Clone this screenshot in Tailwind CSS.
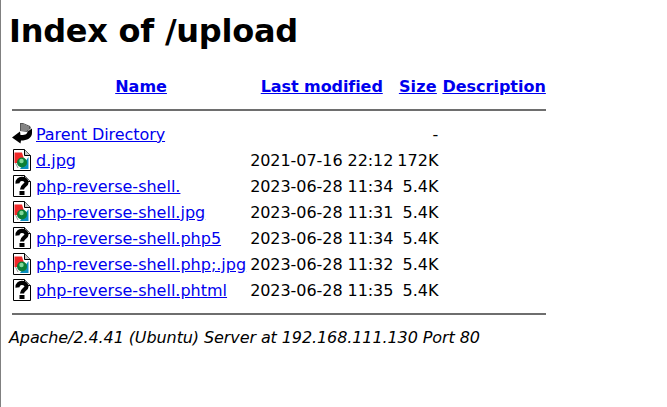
<!DOCTYPE html>
<html lang="en">
<head>
<meta charset="utf-8">
<title>Index of /upload</title>
<script src="https://cdn.jsdelivr.net/npm/@tailwindcss/browser@4"></script>
</head>
<body class="bg-white">
<svg class="hidden" xmlns="http://www.w3.org/2000/svg">
  <symbol id="img" viewBox="0 0 20 22">
    <path d="M1.5 .5H12.5L18.5 6.5V21.5H1.5Z" fill="#fff" stroke="#000"/>
    <path d="M12.5 .5V6.5H18.5" fill="#ccc" stroke="#000"/>
    <path d="M16.5 8V20H8Z" fill="#0a8fc0"/>
    <path d="M2.5 3.5H10L12 10 7 14H2.5Z" fill="#f02828"/>
    <path d="M3.5 14 6 19" stroke="#999"/>
    <circle cx="10" cy="13.5" r="5" fill="#0b7f35"/>
    <circle cx="9.5" cy="12" r="2.2" fill="#7fd89a"/>
  </symbol>
  <symbol id="unk" viewBox="0 0 20 22">
    <path d="M1.5 .5H12.5L18.5 6.5V21.5H1.5Z" fill="#fff" stroke="#000"/>
    <path d="M12.5 .5V6.5H18.5" fill="#ccc" stroke="#000"/>
    <path d="M5.5 8.5C5 2.5 14.5 2.5 14.5 7.5C14.5 10.5 10 10.5 10 14.5" fill="none" stroke="#000" stroke-width="4.2"/>
    <rect x="7.5" y="16" width="5" height="4" fill="#000"/>
  </symbol>
  <symbol id="back" viewBox="0 0 20 22">
    <path d="M8 0H11L18 3 19 5 15 9 8 8Z" fill="#555"/>
    <path d="M10 1V8M12 1V8M14 2V8M16 3V7" stroke="#ddd" stroke-width=".7"/>
    <path d="M15.5 8.5 20 5.5V10C20 15 15 17.5 9 17.5L8.5 20.5 0 14.5 8 8.5 8.5 12C12 12 15 12 15.5 8.5Z" fill="#000"/>
  </symbol>
</svg>
<div class="min-h-screen box-border border-l border-[#808080] pl-2 pt-[13px] pb-2 font-['DejaVu_Sans',sans-serif] text-base leading-[19px] text-black overflow-hidden">
  <h1 class="text-[32px] leading-[37px] font-bold mb-[22.44px] tracking-[-0.25px]">Index of /upload</h1>
  <table class="border-separate border-spacing-[2px]">
    <thead>
      <tr>
        <th class="p-px"><div class="w-5 h-[22px]"></div></th>
        <th class="p-px text-center font-bold"><a href="#" class="text-[#0000ee] underline">Name</a></th>
        <th class="p-px text-center font-bold"><a href="#" class="text-[#0000ee] underline tracking-[-0.08px]">Last modified</a></th>
        <th class="p-px text-center font-bold"><a href="#" class="text-[#0000ee] underline tracking-[0.2px]">Size</a></th>
        <th class="p-px text-center font-bold"><a href="#" class="text-[#0000ee] underline">Description</a></th>
      </tr>
      <tr><th colspan="5" class="p-px"><hr class="my-2 h-[2px] border-0 bg-[#6e6e6e]"></th></tr>
    </thead>
    <tbody>
      <tr>
        <td class="p-px"><svg class="block w-5 h-[22px]"><use href="#back"/></svg></td>
        <td class="p-px"><a href="#" class="text-[#0000ee] underline tracking-[-0.06px]">Parent Directory</a></td>
        <td class="p-px">&nbsp;</td>
        <td class="p-px text-right">-</td>
        <td class="p-px">&nbsp;</td>
      </tr>
      <tr>
        <td class="p-px"><svg class="block w-5 h-[22px]"><use href="#img"/></svg></td>
        <td class="p-px"><a href="#" class="text-[#0000ee] underline">d.jpg</a></td>
        <td class="p-px tracking-[-0.06px]">2021-07-16 22:12</td>
        <td class="p-px text-right">172K</td>
        <td class="p-px">&nbsp;</td>
      </tr>
      <tr>
        <td class="p-px"><svg class="block w-5 h-[22px]"><use href="#unk"/></svg></td>
        <td class="p-px"><a href="#" class="text-[#0000ee] underline">php-reverse-shell.</a></td>
        <td class="p-px tracking-[-0.06px]">2023-06-28 11:34</td>
        <td class="p-px text-right">5.4K</td>
        <td class="p-px">&nbsp;</td>
      </tr>
      <tr>
        <td class="p-px"><svg class="block w-5 h-[22px]"><use href="#img"/></svg></td>
        <td class="p-px"><a href="#" class="text-[#0000ee] underline">php-reverse-shell.jpg</a></td>
        <td class="p-px tracking-[-0.06px]">2023-06-28 11:31</td>
        <td class="p-px text-right">5.4K</td>
        <td class="p-px">&nbsp;</td>
      </tr>
      <tr>
        <td class="p-px"><svg class="block w-5 h-[22px]"><use href="#unk"/></svg></td>
        <td class="p-px"><a href="#" class="text-[#0000ee] underline">php-reverse-shell.php5</a></td>
        <td class="p-px tracking-[-0.06px]">2023-06-28 11:34</td>
        <td class="p-px text-right">5.4K</td>
        <td class="p-px">&nbsp;</td>
      </tr>
      <tr>
        <td class="p-px"><svg class="block w-5 h-[22px]"><use href="#img"/></svg></td>
        <td class="p-px"><a href="#" class="text-[#0000ee] underline">php-reverse-shell.php;.jpg</a></td>
        <td class="p-px tracking-[-0.06px]">2023-06-28 11:32</td>
        <td class="p-px text-right">5.4K</td>
        <td class="p-px">&nbsp;</td>
      </tr>
      <tr>
        <td class="p-px"><svg class="block w-5 h-[22px]"><use href="#unk"/></svg></td>
        <td class="p-px"><a href="#" class="text-[#0000ee] underline">php-reverse-shell.phtml</a></td>
        <td class="p-px tracking-[-0.06px]">2023-06-28 11:35</td>
        <td class="p-px text-right">5.4K</td>
        <td class="p-px">&nbsp;</td>
      </tr>
      <tr><th colspan="5" class="p-px"><hr class="my-2 h-[2px] border-0 bg-[#6e6e6e]"></th></tr>
    </tbody>
  </table>
  <address class="italic mt-[2px] tracking-[-0.095px]">Apache/2.4.41 (Ubuntu) Server at 192.168.111.130 Port 80</address>
</div>
</body>
</html>
